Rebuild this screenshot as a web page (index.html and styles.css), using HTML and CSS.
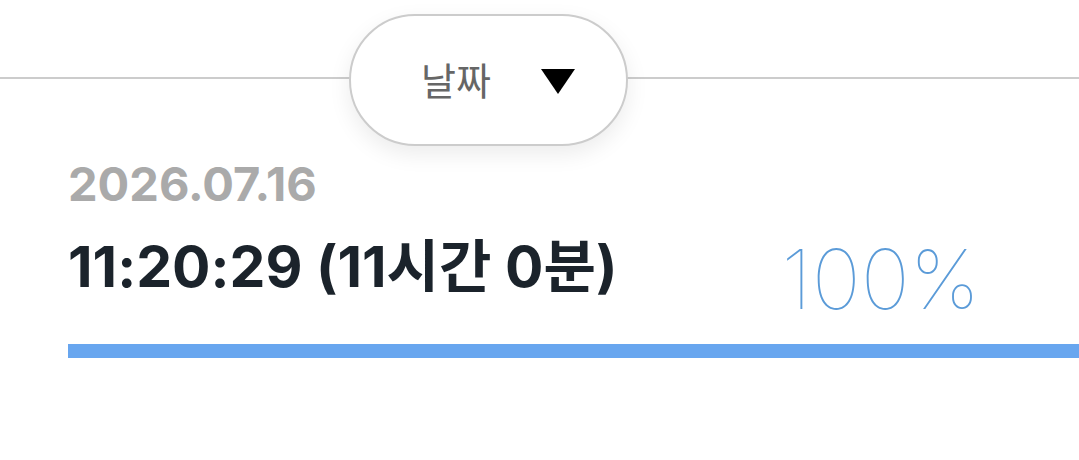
FILE: index.html
```html
<!DOCTYPE html>
<html lang="ko">
<head>
<meta charset="utf-8">
<link rel="stylesheet" href="styles.css">
</head>
<body>
<div class="page">
  <div class="header">
    <button class="pill">
      <span class="pill-label">날짜</span>
      <svg class="caret" width="34" height="25" viewBox="0 0 34 25"><polygon points="0,0 34,0 17,25" fill="#000"/></svg>
    </button>
  </div>
  <div class="content">
    <div class="date">2026.07.16</div>
    <div class="row">
      <div class="time">11:20:29 (11시간 0분)</div>
      <div class="percent">100%</div>
    </div>
    <div class="bar"><div class="bar-fill" style="width:100%"></div></div>
  </div>
</div>
</body>
</html>
```

FILE: styles.css
```css
html, body {
  margin: 0;
  padding: 0;
  background: #fff;
}
.page {
  width: 1079px;
  height: 460px;
  overflow: hidden;
  font-family: Inter, "Noto Sans CJK KR", sans-serif;
}
.header {
  position: relative;
  height: 148px;
  padding-top: 14px;
  box-sizing: border-box;
  padding-left: 349px;
}
.header::before {
  content: "";
  position: absolute;
  left: 0;
  right: 0;
  top: 77px;
  height: 2px;
  background: #cccccc;
}
.pill {
  position: relative;
  display: flex;
  align-items: center;
  width: 279px;
  height: 132px;
  box-sizing: border-box;
  border: 2px solid #cccccc;
  border-radius: 66px;
  background: #fff;
  box-shadow: 0 8px 22px rgba(0,0,0,0.08);
  padding: 0 0 0 70px;
  margin: 0;
  font: inherit;
}
.pill-label {
  font-family: "Noto Sans CJK KR", sans-serif;
  font-size: 38px;
  font-weight: 400;
  color: #666666;
  line-height: 1;
  margin-top: -2px;
}
.caret {
  margin-left: 50px;
  margin-top: 2px;
}
.content {
  padding-left: 68px;
  padding-top: 10px;
}
.date {
  font-size: 47px;
  font-weight: 700;
  color: #aaaaaa;
  letter-spacing: 0;
  line-height: 52px;
}
.row {
  display: flex;
  justify-content: space-between;
  align-items: flex-end;
  padding-right: 99px;
  margin-top: 12px;
}
.time {
  font-size: 57px;
  font-weight: 700;
  color: #1b232b;
  letter-spacing: 0;
  line-height: 70px;
}
.percent {
  font-size: 83px;
  font-weight: 100;
  color: #5b9bd8;
  line-height: 80px;
  letter-spacing: 0;
  position: relative;
  top: 17px;
}
.bar {
  margin-top: 42px;
  height: 14px;
}
.bar-fill {
  height: 14px;
  background: #68a6ef;
}
```
